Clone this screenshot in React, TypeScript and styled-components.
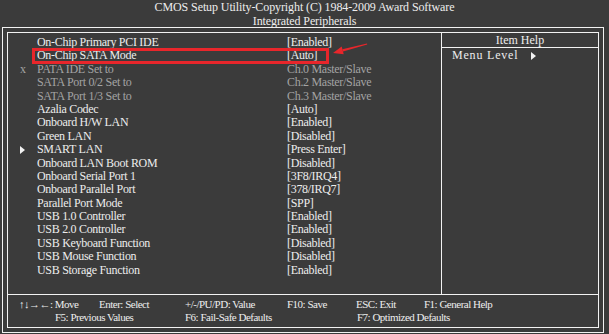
import styled, { createGlobalStyle } from "styled-components";

const GlobalStyle = createGlobalStyle`
  html, body {
    margin: 0;
    padding: 0;
    background: #3b3b3b;
  }
  body {
    font-family: "Liberation Serif", "DejaVu Serif", serif;
    font-size: 12px;
    color: #ededed;
  }
`;

type Item = {
  label: string;
  value: string;
  dim?: boolean;
  marker?: "x" | "arrow";
  selected?: boolean;
};

const items: Item[] = [
  { label: "On-Chip Primary PCI IDE", value: "[Enabled]" },
  { label: "On-Chip SATA Mode", value: "[Auto]", selected: true },
  { label: "PATA IDE Set to", value: "Ch.0 Master/Slave", dim: true, marker: "x" },
  { label: "SATA Port 0/2 Set to", value: "Ch.2 Master/Slave", dim: true },
  { label: "SATA Port 1/3 Set to", value: "Ch.3 Master/Slave", dim: true },
  { label: "Azalia Codec", value: "[Auto]" },
  { label: "Onboard H/W LAN", value: "[Enabled]" },
  { label: "Green LAN", value: "[Disabled]" },
  { label: "SMART LAN", value: "[Press Enter]", marker: "arrow" },
  { label: "Onboard LAN Boot ROM", value: "[Disabled]" },
  { label: "Onboard Serial Port 1", value: "[3F8/IRQ4]" },
  { label: "Onboard Parallel Port", value: "[378/IRQ7]" },
  { label: "Parallel Port Mode", value: "[SPP]" },
  { label: "USB 1.0 Controller", value: "[Enabled]" },
  { label: "USB 2.0 Controller", value: "[Enabled]" },
  { label: "USB Keyboard Function", value: "[Disabled]" },
  { label: "USB Mouse Function", value: "[Disabled]" },
  { label: "USB Storage Function", value: "[Enabled]" },
];

export default function App() {
  return (
    <>
      <GlobalStyle />
      <Screen>
        <Header>
          <TitleLine>CMOS Setup Utility-Copyright (C) 1984-2009 Award Software</TitleLine>
          <TitleLine>Integrated Peripherals</TitleLine>
        </Header>
        <OuterFrame>
          <InnerFrame>
            <Main>
              <ItemList>
                {items.map((item) => (
                  <Row key={item.label} $dim={item.dim} $selected={item.selected}>
                    <Marker>
                      {item.marker === "x" && "x"}
                      {item.marker === "arrow" && <Triangle />}
                    </Marker>
                    <span>{item.label}</span>
                    <span>{item.value}</span>
                    {item.selected && (
                      <Callout viewBox="0 0 40 16" width="40" height="16">
                        <polygon points="3,11 11.7,4.5 13.7,12.3" fill="#e8262b" />
                        <polygon points="12.4,7.2 37,1.6 37.2,2.4 13,9.6" fill="#e8262b" />
                      </Callout>
                    )}
                  </Row>
                ))}
              </ItemList>
              <HelpPanel>
                <HelpTitle>Item Help</HelpTitle>
                <HelpLine>
                  <span>Menu Level</span>
                  <Triangle />
                </HelpLine>
              </HelpPanel>
            </Main>
            <Footer>
              <KeysTop>
                <span>↑↓→←: Move</span>
                <span>Enter: Select</span>
                <span>+/-/PU/PD: Value</span>
                <span>F10: Save</span>
                <span>ESC: Exit</span>
                <span>F1: General Help</span>
              </KeysTop>
              <KeysBottom>
                <span>F5: Previous Values</span>
                <span>F6: Fail-Safe Defaults</span>
                <span>F7: Optimized Defaults</span>
              </KeysBottom>
            </Footer>
          </InnerFrame>
        </OuterFrame>
      </Screen>
    </>
  );
}

const Screen = styled.div`
  width: 609px;
  height: 334px;
  overflow: hidden;
`;

const Header = styled.div`
  height: 27px;
  display: flex;
  flex-direction: column;
  align-items: center;
  letter-spacing: -0.1px;
`;

const TitleLine = styled.div`
  flex: none;
  height: 14px;
  line-height: 14px;
  white-space: nowrap;
`;

const OuterFrame = styled.div`
  box-sizing: border-box;
  margin-left: 2px;
  width: 602px;
  height: 306px;
  border: 1px solid #f2f2f2;
  padding: 4px;
`;

const InnerFrame = styled.div`
  box-sizing: border-box;
  height: 100%;
  border: 1px solid #f2f2f2;
  display: grid;
  grid-template-rows: 1fr 33px;
`;

const Main = styled.div`
  display: grid;
  grid-template-columns: 434px 1fr;
`;

const ItemList = styled.div`
  border-right: 1px solid #f2f2f2;
  padding-top: 3px;
`;

const Row = styled.div<{ $dim?: boolean; $selected?: boolean }>`
  position: relative;
  display: grid;
  grid-template-columns: 29px 250px 1fr;
  height: 13.4px;
  line-height: 13.4px;
  white-space: nowrap;
  letter-spacing: -0.3px;
  color: ${(p) => (p.$dim ? "#a3a3a3" : "#ededed")};

  ${(p) =>
    p.$selected &&
    `
    &::after {
      content: "";
      position: absolute;
      left: 24px;
      top: -1px;
      width: 297px;
      height: 16px;
      box-sizing: border-box;
      border: 3px solid #e8262b;
    }
  `}
`;

const Marker = styled.span`
  display: flex;
  align-items: center;
  padding-left: 12px;
`;

const Triangle = styled.i`
  display: inline-block;
  width: 0;
  height: 0;
  border-top: 4px solid transparent;
  border-bottom: 4px solid transparent;
  border-left: 5px solid #f2f2f2;
`;

const Callout = styled.svg`
  position: absolute;
  left: 322px;
  top: -7px;
  overflow: visible;
`;

const HelpPanel = styled.div`
  display: flex;
  flex-direction: column;
`;

const HelpTitle = styled.div`
  height: 13px;
  padding-top: 1px;
  line-height: 13px;
  text-align: center;
  border-bottom: 1px solid #f2f2f2;
`;

const HelpLine = styled.div`
  display: flex;
  align-items: center;
  gap: 13px;
  padding-left: 10px;
  padding-top: 1px;
  height: 13px;
  line-height: 13px;
  letter-spacing: 0.8px;
`;

const Footer = styled.div`
  border-top: 1px solid #f2f2f2;
  padding-top: 3px;
  font-size: 11px;
  letter-spacing: -0.5px;
  line-height: 13px;
  white-space: nowrap;
`;

const KeysTop = styled.div`
  display: grid;
  grid-template-columns: 80px 86px 102px 69px 68px 1fr;
  padding-left: 11px;
`;

const KeysBottom = styled.div`
  display: grid;
  grid-template-columns: 130px 172px 1fr;
  padding-left: 47px;
`;
